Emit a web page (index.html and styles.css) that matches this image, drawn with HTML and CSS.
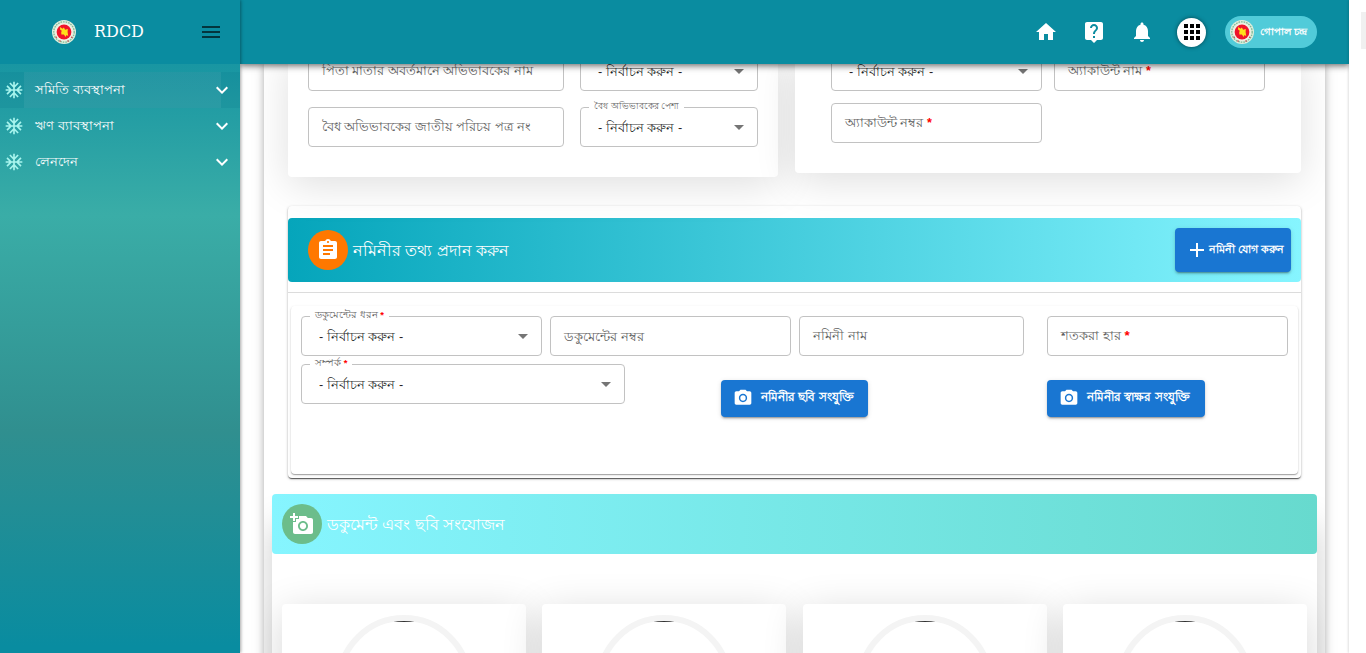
FILE: index.html
```
<!DOCTYPE html>
<html lang="en">
<head>
<meta charset="utf-8">
<title>RDCD</title>
<link rel="stylesheet" href="styles.css">
</head>
<body>
<svg class="defs" width="0" height="0">
  <symbol id="emblem" viewBox="0 0 24 24">
    <circle cx="12" cy="12" r="12" fill="#dfeedd"/>
    <circle cx="12" cy="12" r="10.2" fill="none" stroke="#7fb996" stroke-width="1.300" stroke-dasharray="1.6 1"/>
    <circle cx="12" cy="12" r="8.800" fill="#f3f0e4"/>
    <circle cx="12" cy="12" r="7.4" fill="#f0142a"/>
    <path d="M8 7l2.500 1.700 1.400-1.200 1.200 2.200 2.700-.8-.2 3 .6 4.100-1.800-1-.6 2-2-2.600-2.400.2-.2-2.400.6-1.400-1.600-1z" fill="#ffe01a"/>
    <g fill="#d83a4a"><circle cx="4.300" cy="17.200" r=".8"/><circle cx="8" cy="21" r=".8"/><circle cx="16" cy="21" r=".8"/><circle cx="19.700" cy="17.200" r=".8"/></g>
  </symbol>
  <symbol id="flake" viewBox="0 0 24 24"><path d="M22 11h-4.17l3.24-3.24-1.41-1.42L15 11h-2V9l4.66-4.66-1.42-1.41L13 6.17V2h-2v4.17L7.76 2.93 6.34 4.34 11 9v2H9L4.34 6.34 2.93 7.76 6.17 11H2v2h4.17l-3.24 3.24 1.41 1.42L9 13h2v2l-4.66 4.66 1.42 1.41L11 17.83V22h2v-4.17l3.24 3.24 1.42-1.41L13 15v-2h2l4.66 4.66 1.41-1.42L17.83 13H22z"/></symbol>
  <symbol id="chev" viewBox="0 0 24 24"><path d="M16.59 8.59 12 13.17 7.41 8.59 6 10l6 6 6-6z"/></symbol>
  <symbol id="camera" viewBox="0 0 24 24"><path d="M9 2 7.17 4H4c-1.100 0-2 .9-2 2v12c0 1.100.9 2 2 2h16c1.100 0 2-.9 2-2V6c0-1.100-.9-2-2-2h-3.170L15 2H9zm3 15c-2.760 0-5-2.240-5-5s2.240-5 5-5 5 2.240 5 5-2.240 5-5 5z" fill-rule="evenodd"/><circle cx="12" cy="12" r="3.200"/></symbol>
</svg>
<div class="app">
  <aside class="sidebar">
    <div class="brand">
      <svg class="emblem"><use href="#emblem"/></svg>
      <span class="brand-name">RDCD</span>
      <svg class="burger" viewBox="0 0 24 24"><path d="M3 18h18v-2H3v2zm0-5h18v-2H3v2zm0-7v2h18V6H3z"/></svg>
    </div>
    <nav class="menu">
      <a class="item active"><svg class="flake"><use href="#flake"/></svg><span class="item-text">সমিতি ব্যবস্থাপনা</span><svg class="chev"><use href="#chev"/></svg></a>
      <a class="item"><svg class="flake"><use href="#flake"/></svg><span class="item-text">ঋণ ব্যাবস্থাপনা</span><svg class="chev"><use href="#chev"/></svg></a>
      <a class="item"><svg class="flake"><use href="#flake"/></svg><span class="item-text">লেনদেন</span><svg class="chev"><use href="#chev"/></svg></a>
    </nav>
  </aside>
  <div class="page">
    <header class="topbar">
      <svg class="ic" viewBox="0 0 24 24"><path d="M10 20v-6h4v6h5v-8h3L12 3 2 12h3v8z"/></svg>
      <svg class="ic" viewBox="0 0 24 24"><path d="M19 2H5c-1.110 0-2 .9-2 2v14c0 1.100.89 2 2 2h4l3 3 3-3h4c1.100 0 2-.9 2-2V4c0-1.100-.9-2-2-2zm-6 16h-2v-2h2v2zm2.070-7.750-.9.920C13.450 11.900 13 12.500 13 14h-2v-.5c0-1.100.45-2.100 1.170-2.830l1.240-1.260c.37-.36.59-.86.59-1.410 0-1.100-.9-2-2-2s-2 .9-2 2H8c0-2.210 1.790-4 4-4s4 1.790 4 4c0 .88-.36 1.680-.93 2.250z"/></svg>
      <svg class="ic" viewBox="0 0 24 24"><path d="M12 22c1.100 0 2-.9 2-2h-4c0 1.100.89 2 2 2zm6-6v-5c0-3.070-1.640-5.640-4.500-6.320V4c0-.83-.67-1.500-1.500-1.500s-1.500.67-1.500 1.500v.68C7.630 5.360 6 7.920 6 11v5l-2 2v1h16v-1l-2-2z"/></svg>
      <span class="apps"><svg viewBox="0 0 24 24"><path d="M4 8h4V4H4v4zm6 12h4v-4h-4v4zm-6 0h4v-4H4v4zm0-6h4v-4H4v4zm6 0h4v-4h-4v4zm6-10v4h4V4h-4zm-6 4h4V4h-4v4zm6 6h4v-4h-4v4zm0 6h4v-4h-4v4z"/></svg></span>
      <span class="user"><svg class="emblem"><use href="#emblem"/></svg><span class="user-name">গোপাল চন্দ্র</span></span>
    </header>
    <main class="content">
      <div class="sheet">
        <div class="cards">
          <section class="card card-left">
            <div class="field"><span class="ph">পিতা মাতার অবর্তমানে অভিভাবকের নাম</span></div>
            <div class="field select"><span>- নির্বাচন করুন -</span></div>
            <div class="field"><span class="ph">বৈধ অভিভাবকের জাতীয় পরিচয় পত্র নং</span></div>
            <div class="field select"><span class="label">বৈধ অভিভাবকের পেশা</span><span>- নির্বাচন করুন -</span></div>
          </section>
          <section class="card card-right">
            <div class="field select"><span>- নির্বাচন করুন -</span></div>
            <div class="field"><span class="ph">অ্যাকাউন্ট নাম <b>*</b></span></div>
            <div class="field"><span class="ph">অ্যাকাউন্ট নম্বর <b>*</b></span></div>
          </section>
        </div>
        <section class="nominee">
          <div class="bar bar-nominee">
            <span class="dot orange"><svg viewBox="0 0 24 24"><path d="M19 3h-4.180C14.400 1.840 13.300 1 12 1c-1.300 0-2.400.84-2.820 2H5c-1.100 0-2 .9-2 2v14c0 1.100.9 2 2 2h14c1.100 0 2-.9 2-2V5c0-1.100-.9-2-2-2zm-7 0c.55 0 1 .45 1 1s-.45 1-1 1-1-.45-1-1 .45-1 1-1zm2 14H7v-2h7v2zm3-4H7v-2h10v2zm0-4H7V7h10v2z"/></svg></span>
            <h2 class="title">নমিনীর তথ্য প্রদান করুন</h2>
            <button class="btn add"><svg viewBox="0 0 24 24"><path d="M19 13h-6v6h-2v-6H5v-2h6V5h2v6h6v2z"/></svg><span>নমিনী যোগ করুন</span></button>
          </div>
          <hr class="rule">
          <div class="inner">
            <div class="row">
              <div class="field select f-type"><span class="label">ডকুমেন্টের ধরন <b>*</b></span><span>- নির্বাচন করুন -</span></div>
              <div class="field f-num"><span class="ph">ডকুমেন্টের নম্বর</span></div>
              <div class="field f-name"><span class="ph">নমিনী নাম</span></div>
              <div class="field f-rate"><span class="ph">শতকরা হার <b>*</b></span></div>
            </div>
            <div class="row row-second">
              <div class="field select f-rel"><span class="label">সম্পর্ক <b>*</b></span><span>- নির্বাচন করুন -</span></div>
              <button class="btn photo"><svg><use href="#camera"/></svg><span>নমিনীর ছবি সংযুক্তি</span></button>
              <button class="btn sign"><svg><use href="#camera"/></svg><span>নমিনীর স্বাক্ষর সংযুক্তি</span></button>
            </div>
          </div>
        </section>
        <section class="docs">
          <div class="bar bar-docs">
            <span class="dot green"><svg viewBox="0 0 24 24"><path d="M3 4V1h2v3h3v2H5v3H3V6H0V4h3zm3 6V7h3V4h7l1.830 2H21c1.100 0 2 .9 2 2v12c0 1.100-.9 2-2 2H5c-1.100 0-2-.9-2-2V10h3zm7 9c2.760 0 5-2.240 5-5s-2.240-5-5-5-5 2.240-5 5 2.240 5 5 5zm-3.200-5c0 1.770 1.430 3.200 3.200 3.200s3.200-1.430 3.200-3.200-1.430-3.200-3.200-3.200-3.200 1.430-3.200 3.200z"/></svg></span>
            <h2 class="title">ডকুমেন্ট এবং ছবি সংযোজন</h2>
          </div>
          <div class="tiles">
            <div class="tile"><div class="ring"><div class="pic"></div></div></div>
            <div class="tile"><div class="ring"><div class="pic"></div></div></div>
            <div class="tile"><div class="ring"><div class="pic"></div></div></div>
            <div class="tile"><div class="ring"><div class="pic"></div></div></div>
          </div>
        </section>
      </div>
    </main>
  </div>
  <div class="gutter"><div class="thumb"></div></div>
</div>
</body>
</html>
```
FILE: styles.css
```
* { box-sizing: border-box; }
body { margin: 0; font-family: "Liberation Sans", sans-serif; font-size: 13px; color: rgba(0,0,0,.87); background: #fff; }
.defs { position: absolute; }
.app { display: flex; height: 653px; overflow: hidden; }
.emblem { width: 24px; height: 24px; }

.sidebar { width: 240px; flex: none; position: relative; z-index: 3; background: linear-gradient(#0a8ca0 0%, #3aada7 33%, #308f8f 66%, #098ca0 99%); box-shadow: 1px 0 3px rgba(0,0,0,.35); }
.brand { height: 64px; display: flex; align-items: center; padding: 0 17px 0 52px; background: #0a8ca0; color: #fff; }
.brand-name { margin-left: 18px; font-family: "DejaVu Serif", serif; font-size: 16px; line-height: 24px; }
.burger { width: 24px; height: 24px; margin-left: auto; fill: rgba(0,0,0,.62); }
.menu { padding-top: 8px; }
.item { height: 36px; display: flex; align-items: center; padding: 0 6px 0 4px; color: #fff; }
.item.active { background: linear-gradient(90deg, transparent 24px, rgba(255,255,255,.06) 24px, rgba(255,255,255,.06) 221px, transparent 221px), rgba(0,100,120,.12); }
.flake { width: 20px; height: 20px; fill: #a8f5ee; }
.item-text { margin-left: 11px; padding-top: 1px; font-size: 12.8px; font-weight: 500; }
.chev { width: 24px; height: 24px; margin-left: auto; fill: #fff; }

.page { flex: 1; min-width: 0; display: flex; flex-direction: column; }
.topbar { height: 64px; flex: none; position: relative; z-index: 2; display: flex; align-items: center; justify-content: flex-end; padding-right: 32px; background: #0a8ca0; box-shadow: 0 2px 4px -1px rgba(0,0,0,.3), 0 4px 5px rgba(0,0,0,.2), 0 1px 10px rgba(0,0,0,.14); }
.ic { width: 24px; height: 24px; margin-right: 24px; fill: #fff; }
.apps { width: 29px; height: 29px; margin: 0 19px 0 -1px; border-radius: 50%; background: #fff; display: grid; place-items: center; box-shadow: 0 0 4px rgba(0,0,0,.5); }
.apps svg { width: 24px; height: 24px; }
.user { width: 92px; height: 32px; border-radius: 16px; background: #51cbd9; display: flex; align-items: center; padding-left: 5px; color: #fff; }
.user-name { margin-left: 6px; padding-top: 1px; font-size: 10.2px; font-weight: 700; white-space: nowrap; }

.content { flex: 1; min-height: 0; padding: 0 24px; overflow: hidden; }
.sheet { height: 760px; padding: 0 8px; background: #fff; box-shadow: 0 0 7px rgba(0,0,0,.26), 0 0 14px rgba(0,0,0,.1); overflow: hidden; }
.cards { display: flex; align-items: flex-start; gap: 17px; margin: -13px 16px 0; }
.card { display: grid; border-radius: 4px; background: #fff; box-shadow: 0 8px 40px rgba(0,0,0,.13); }
.card-left { width: 490px; height: 126px; grid-template-columns: 256px 178px; gap: 16px; align-content: start; padding-left: 20px; }
.card-right { width: 506px; height: 122px; grid-template-columns: 211px 211px; gap: 12px; align-content: start; padding-left: 36px; }
.field { position: relative; height: 40px; border: 1px solid #c2c2c2; border-radius: 4px; display: flex; align-items: center; padding: 2px 13px 0; white-space: nowrap; }
.select { padding-left: 17px; font-size: 12.8px; font-weight: 500; }
.select::after { content: ""; margin: -2px 0 0 auto; border: 5px solid transparent; border-top-color: #757575; border-bottom: 0; }
.ph { color: #5f5f5f; font-size: 12.9px; }
.card .ph { font-size: 12.5px; }
b { color: #f00; font-weight: 700; }
.label { position: absolute; left: 8px; top: -9px; padding: 0 5px; background: #fff; color: #5f5f5f; font-size: 9.5px; line-height: 14px; font-weight: 400; }
.card .label { font-size: 9.200px; }

.nominee { margin: 29px 16px 0; height: 272px; padding-top: 12px; border-radius: 4px; background: #fff; box-shadow: 0 2px 1px -1px rgba(0,0,0,.4), 0 1px 1px rgba(0,0,0,.3), 0 1px 3px rgba(0,0,0,.25); }
.bar { display: flex; align-items: center; border-radius: 4px; color: #fff; }
.bar-nominee { height: 64px; padding: 0 10px 0 20px; background: linear-gradient(90deg, #05a5bb, #86f5ff); }
.dot { width: 40px; height: 40px; border-radius: 50%; display: grid; place-items: center; }
.dot svg { width: 24px; height: 24px; fill: #fff; }
.orange { background: #ff7800; }
.green { background: #6cbd8b; }
.title { margin: 2px 0 0 5px; font-size: 16px; font-weight: 500; white-space: nowrap; }
.btn { border: 0; border-radius: 4px; background: #1976d2; color: #fff; font-family: inherit; font-weight: 600; font-size: 12px; display: flex; align-items: center; white-space: nowrap; padding: 0; box-shadow: 0 3px 1px -2px rgba(0,0,0,.2), 0 2px 2px rgba(0,0,0,.14), 0 1px 5px rgba(0,0,0,.12); }
.btn svg { fill: #fff; }
.add { width: 116px; height: 44px; margin-left: auto; padding-left: 10px; font-size: 10.700px; }
.add svg { width: 24px; height: 24px; }
.rule { margin: 10px 0 0; border: 0; border-top: 1px solid #dcdcdc; }
.inner { height: 168px; margin: 13px 3px 0; padding: 10px 10px 0; border-radius: 4px; box-shadow: 0 1px 1px rgba(0,0,0,.3), 0 1px 3px rgba(0,0,0,.12); }
.row { display: flex; }
.f-type, .f-num { width: 241px; margin-right: 8px; }
.f-name { width: 225px; }
.f-rate { width: 241px; margin-left: 23px; }
.f-name .ph, .f-rate .ph { font-size: 13.400px; }
.row-second { margin-top: 8px; align-items: flex-start; }
.f-rel { width: 324px; }
.photo, .sign { height: 37px; margin-top: 16px; padding: 0 0 2px 12px; }
.photo svg, .sign svg { width: 20px; height: 20px; margin-right: 8px; }
.photo { width: 147px; margin-left: 96px; }
.sign { width: 158px; margin-left: 179px; }

.docs { height: 260px; margin-top: 16px; border-radius: 4px; box-shadow: 0 32px 36px rgba(0,0,0,.2); }
.bar-docs { height: 60px; padding-left: 10px; background: linear-gradient(90deg, #86f5ff, #67dace); }
.tiles { display: flex; justify-content: space-between; padding: 50px 10px 0; }
.tile { width: 244px; height: 180px; border-radius: 4px; background: #fff; padding-top: 11px; box-shadow: 0 8px 40px rgba(0,0,0,.16); }
.ring { width: 136px; height: 136px; margin: 0 auto; border: 6px solid #f4f4f4; border-radius: 50%; overflow: hidden; }
.pic { height: 124px; border-top: 1px solid #333; }

.gutter { width: 17px; flex: none; position: relative; z-index: 3; background: #fff; padding: 12px 0 0 12px; box-shadow: -1px 0 2px rgba(0,0,0,.12); }
.thumb { height: 37px; background: #f0f0f0; }
```
